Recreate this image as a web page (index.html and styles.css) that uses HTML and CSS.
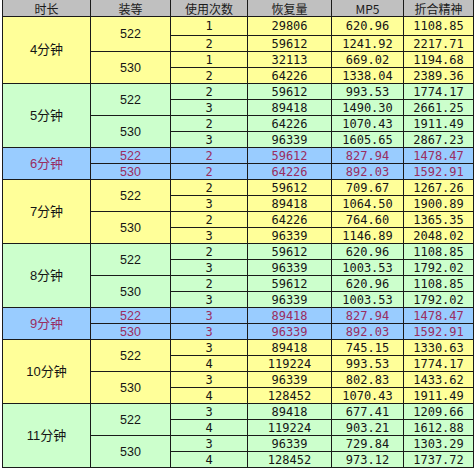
FILE: index.html
```html
<!DOCTYPE html>
<html lang="zh">
<head>
<meta charset="utf-8">
<title>装等恢复量</title>
<link rel="stylesheet" href="styles.css">
</head>
<body>
<table class="sheet">
<colgroup>
<col class="c1"><col class="c2"><col class="c3"><col class="c4"><col class="c5"><col class="c6">
</colgroup>
<thead>
<tr class="head"><th>时长</th><th>装等</th><th>使用次数</th><th>恢复量</th><th>MP5</th><th>折合精神</th></tr>
</thead>
<tbody>
<tr class="y first"><td class="dur" rowspan="4">4分钟</td><td class="gear" rowspan="2">522</td><td class="num">1</td><td class="num">29806</td><td class="num">620.96</td><td class="num">1108.85</td></tr>
<tr class="y"><td class="num">2</td><td class="num">59612</td><td class="num">1241.92</td><td class="num">2217.71</td></tr>
<tr class="y"><td class="gear" rowspan="2">530</td><td class="num">1</td><td class="num">32113</td><td class="num">669.02</td><td class="num">1194.68</td></tr>
<tr class="y"><td class="num">2</td><td class="num">64226</td><td class="num">1338.04</td><td class="num">2389.36</td></tr>

<tr class="g"><td class="dur" rowspan="4">5分钟</td><td class="gear" rowspan="2">522</td><td class="num">2</td><td class="num">59612</td><td class="num">993.53</td><td class="num">1774.17</td></tr>
<tr class="g"><td class="num">3</td><td class="num">89418</td><td class="num">1490.30</td><td class="num">2661.25</td></tr>
<tr class="g"><td class="gear" rowspan="2">530</td><td class="num">2</td><td class="num">64226</td><td class="num">1070.43</td><td class="num">1911.49</td></tr>
<tr class="g"><td class="num">3</td><td class="num">96339</td><td class="num">1605.65</td><td class="num">2867.23</td></tr>

<tr class="b"><td class="dur" rowspan="2">6分钟</td><td class="gear">522</td><td class="num">2</td><td class="num">59612</td><td class="num">827.94</td><td class="num">1478.47</td></tr>
<tr class="b"><td class="gear">530</td><td class="num">2</td><td class="num">64226</td><td class="num">892.03</td><td class="num">1592.91</td></tr>

<tr class="y"><td class="dur" rowspan="4">7分钟</td><td class="gear" rowspan="2">522</td><td class="num">2</td><td class="num">59612</td><td class="num">709.67</td><td class="num">1267.26</td></tr>
<tr class="y"><td class="num">3</td><td class="num">89418</td><td class="num">1064.50</td><td class="num">1900.89</td></tr>
<tr class="y"><td class="gear" rowspan="2">530</td><td class="num">2</td><td class="num">64226</td><td class="num">764.60</td><td class="num">1365.35</td></tr>
<tr class="y"><td class="num">3</td><td class="num">96339</td><td class="num">1146.89</td><td class="num">2048.02</td></tr>

<tr class="g"><td class="dur" rowspan="4">8分钟</td><td class="gear" rowspan="2">522</td><td class="num">2</td><td class="num">59612</td><td class="num">620.96</td><td class="num">1108.85</td></tr>
<tr class="g"><td class="num">3</td><td class="num">96339</td><td class="num">1003.53</td><td class="num">1792.02</td></tr>
<tr class="g"><td class="gear" rowspan="2">530</td><td class="num">2</td><td class="num">59612</td><td class="num">620.96</td><td class="num">1108.85</td></tr>
<tr class="g"><td class="num">3</td><td class="num">96339</td><td class="num">1003.53</td><td class="num">1792.02</td></tr>

<tr class="b"><td class="dur" rowspan="2">9分钟</td><td class="gear">522</td><td class="num">3</td><td class="num">89418</td><td class="num">827.94</td><td class="num">1478.47</td></tr>
<tr class="b"><td class="gear">530</td><td class="num">3</td><td class="num">96339</td><td class="num">892.03</td><td class="num">1592.91</td></tr>

<tr class="y"><td class="dur" rowspan="4">10分钟</td><td class="gear" rowspan="2">522</td><td class="num">3</td><td class="num">89418</td><td class="num">745.15</td><td class="num">1330.63</td></tr>
<tr class="y"><td class="num">4</td><td class="num">119224</td><td class="num">993.53</td><td class="num">1774.17</td></tr>
<tr class="y"><td class="gear" rowspan="2">530</td><td class="num">3</td><td class="num">96339</td><td class="num">802.83</td><td class="num">1433.62</td></tr>
<tr class="y"><td class="num">4</td><td class="num">128452</td><td class="num">1070.43</td><td class="num">1911.49</td></tr>

<tr class="g"><td class="dur" rowspan="4">11分钟</td><td class="gear" rowspan="2">522</td><td class="num">3</td><td class="num">89418</td><td class="num">677.41</td><td class="num">1209.66</td></tr>
<tr class="g"><td class="num">4</td><td class="num">119224</td><td class="num">903.21</td><td class="num">1612.88</td></tr>
<tr class="g"><td class="gear" rowspan="2">530</td><td class="num">3</td><td class="num">96339</td><td class="num">729.84</td><td class="num">1303.29</td></tr>
<tr class="g"><td class="num">4</td><td class="num">128452</td><td class="num">973.12</td><td class="num">1737.72</td></tr>
</tbody>
</table>
</body>
</html>
```
FILE: styles.css
```css
html, body {
  margin: 0;
  padding: 0;
  background: #ffffff;
}

body {
  padding: 0 0 0 2px;
}

.sheet {
  border-collapse: collapse;
  table-layout: fixed;
  width: 471px;
  color: #151515;
}

.c1 { width: 88px; }
.c2 { width: 80px; }
.c3 { width: 77px; }
.c4 { width: 84px; }
.c5 { width: 72px; }
.c6 { width: 70px; }

.sheet th,
.sheet td {
  border: 1px solid #1a1a1a;
  padding: 0;
  text-align: center;
  vertical-align: middle;
  line-height: 14px;
  white-space: nowrap;
}

.head {
  background: #c0c0c0;
}

.head th {
  border-top: 0;
  font-family: "Noto Sans CJK SC", "DejaVu Sans", sans-serif;
  font-size: 12px;
  font-weight: normal;
  line-height: 14px;
  height: 14px;
  padding-top: 2px;
  vertical-align: top;
  color: #1a1a1a;
}

.sheet tbody tr {
  height: 16px;
}

.sheet tbody tr.first {
  height: 19px;
}

.y { background: #ffff99; }
.g { background: #ccffcc; }
.b { background: #99ccff; }

.dur {
  font-family: "Liberation Sans", "Noto Sans CJK SC", sans-serif;
  font-size: 13px;
}

.gear {
  font-family: "Liberation Sans", sans-serif;
  font-size: 12.5px;
}

.num {
  font-family: "DejaVu Sans Mono", monospace;
  font-size: 12px;
}

.b td {
  color: #9a2d62;
}
```
